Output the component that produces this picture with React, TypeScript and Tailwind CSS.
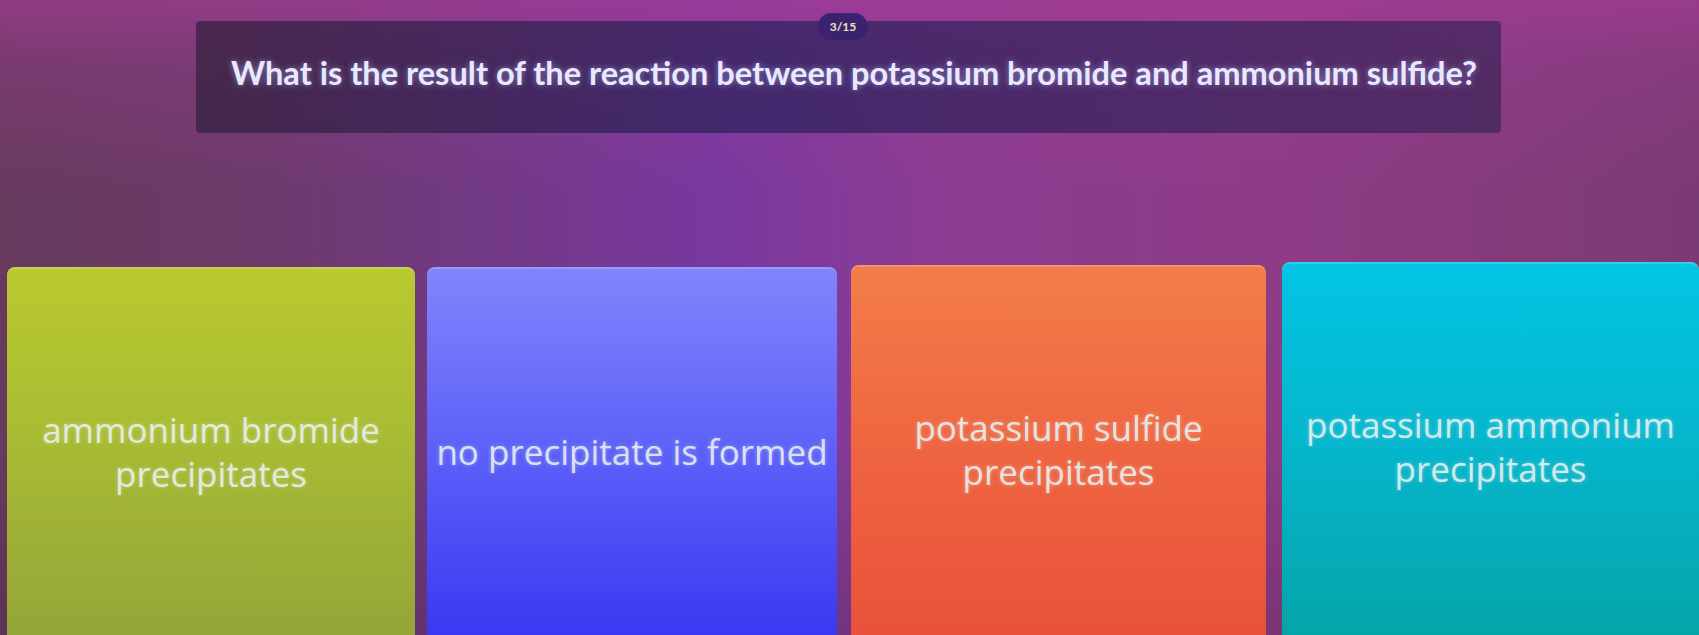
import React from "react";

const answers = [
  {
    text: "ammonium bromide precipitates",
    box: "w-[408px] ml-[7px] mt-[267px] bg-[linear-gradient(180deg,#b9c92f_0%,#a9bb33_45%,#93a43a_100%)]",
  },
  {
    text: "no precipitate is formed",
    box: "w-[410px] ml-[12px] mt-[267px] bg-[linear-gradient(180deg,#8185fb_0%,#5f63f8_45%,#3737f2_100%)]",
  },
  {
    text: "potassium sulfide precipitates",
    box: "w-[415px] ml-[14px] mt-[265px] bg-[linear-gradient(180deg,#f37d4a_0%,#ee6440_50%,#e9503a_100%)]",
  },
  {
    text: "potassium ammonium precipitates",
    box: "w-[417px] ml-[16px] mt-[262px] bg-[linear-gradient(180deg,#03c5e4_0%,#05b5cb_50%,#06a4a8_100%)]",
  },
];

export default function App() {
  return (
    <div className="relative w-[1699px] h-[635px] overflow-hidden bg-[linear-gradient(180deg,rgba(168,60,150,0.65)_0%,rgba(160,60,150,0.3)_10%,rgba(150,60,140,0)_30%,rgba(60,30,60,0)_70%,rgba(60,30,60,0.25)_100%),linear-gradient(90deg,#683a5e_0%,#6c3a6a_15%,#7838a0_42%,#8c3c92_55%,#8e3c86_75%,#7a3a74_100%)]">
      {/* question header */}
      <div className="relative ml-[196px] mt-[21px] w-[1305px] h-[112px] rounded-[4px] bg-[linear-gradient(90deg,rgba(50,32,62,0.72)_0%,rgba(42,34,92,0.72)_45%,rgba(58,36,88,0.7)_100%)] pt-[33px] pl-[35px]">
        <div className="absolute left-[647px] -top-[8px] -translate-x-1/2 h-[27px] px-[12px] rounded-full bg-[#3a2270] flex items-center text-[12px] font-bold text-[#efe4b4] font-['Lato',sans-serif]">
          3/15
        </div>
        <p className="font-['Lato',sans-serif] font-bold text-[32.6px] leading-[38px] text-[#e9e8ff] [text-shadow:0_0_6px_rgba(190,200,255,0.55)] whitespace-nowrap">
          What is the result of the reaction between potassium bromide and ammonium sulfide?
        </p>
      </div>

      {/* answer tiles */}
      <div className="absolute left-0 top-0 flex items-start">
        {answers.map((a) => (
          <div
            key={a.text}
            className={`${a.box} h-[380px] rounded-[8px] flex items-center justify-center px-[4px] pb-[10px] shadow-[inset_0_2px_0_rgba(255,255,255,0.18)]`}
          >
            <span className="font-['Open_Sans',sans-serif] font-medium text-[35px] leading-[44px] text-center text-[#e6f1f0]/90 [text-shadow:0_0_4px_rgba(255,255,255,0.35)]">
              {a.text.startsWith("no ") ? (
                a.text
              ) : (
                <>
                  {a.text.replace(" precipitates", "")}
                  <br />
                  precipitates
                </>
              )}
            </span>
          </div>
        ))}
      </div>
    </div>
  );
}
